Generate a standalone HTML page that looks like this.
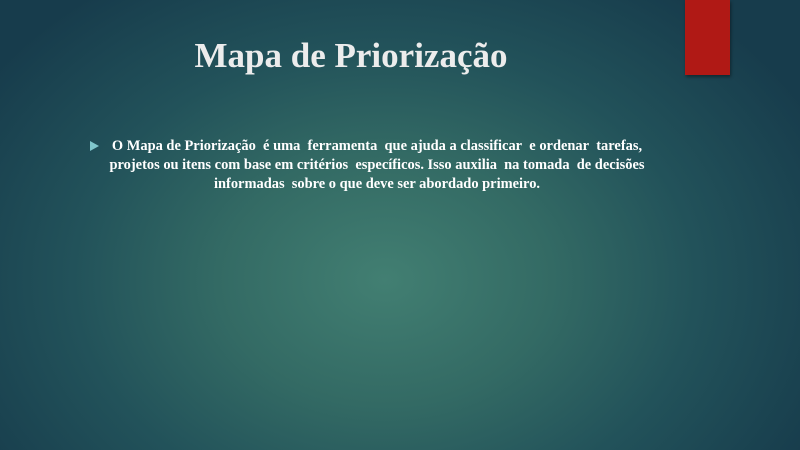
<!DOCTYPE html>
<html><head><meta charset="utf-8"><style>
html,body{margin:0;padding:0}
body{width:800px;height:450px;overflow:hidden;position:relative;
background:radial-gradient(ellipse 480px 360px at 385px 280px,#427f72 0%,#336a64 35%,#22525a 65%,#173c4c 100%);
font-family:"Liberation Serif",serif;color:#fff}
.red{position:absolute;left:685px;top:0;width:45px;height:75px;background:#b01915;box-shadow:1px 2px 3px rgba(0,0,0,.4)}
h1{position:absolute;left:0;width:702px;top:34px;margin:0;text-align:center;font-size:35px;font-weight:bold;color:#ececec;line-height:44px}
.b{position:absolute;left:90px;top:141px;width:0;height:0;border-left:9px solid #7fc6cc;border-top:5px solid transparent;border-bottom:5px solid transparent}
.t{position:absolute;left:0;width:754px;top:137px;text-align:center;font-size:14.45px;font-weight:bold;line-height:19px;letter-spacing:0}
</style></head><body>
<div class="red"></div>
<h1>Mapa de Priorização</h1>
<div class="b"></div>
<div class="t">O Mapa de Priorização&nbsp; é uma&nbsp; ferramenta&nbsp; que ajuda a classificar&nbsp; e ordenar&nbsp; tarefas,<br>projetos ou itens com base em critérios&nbsp; específicos. Isso auxilia&nbsp; na tomada&nbsp; de decisões<br>informadas&nbsp; sobre o que deve ser abordado primeiro.</div>
</body></html>
